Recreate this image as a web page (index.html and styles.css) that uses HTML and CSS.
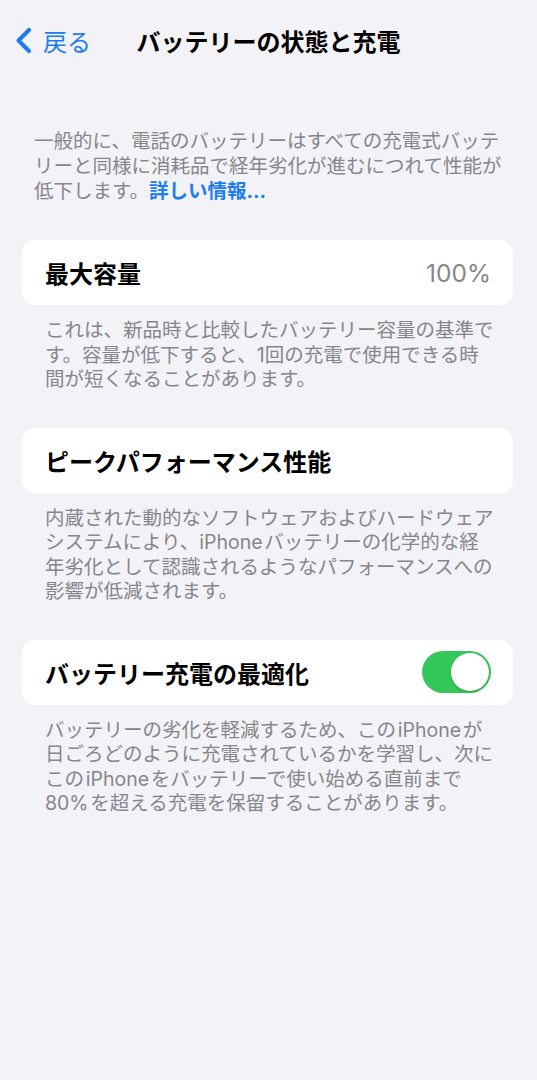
FILE: index.html
```html
<!DOCTYPE html>
<html lang="ja">
<head>
    <meta charset="UTF-8">
    <meta name="viewport" content="width=device-width, initial-scale=1.0">
    <title>バッテリーの状態と充電</title>
    <link rel="stylesheet" href="styles.css">
</head>
<body>
    <header class="nav">
        <a class="back" href="#">
            <svg class="chevron" width="18" height="27" viewBox="0 0 18 27">
                <path d="M15 3 L4.5 13.5 L15 24" fill="none" stroke="currentColor" stroke-width="4.2" stroke-linecap="round" stroke-linejoin="round"/>
            </svg>
            <span>戻る</span>
        </a>
        <h1 class="title">バッテリーの状態と充電</h1>
        <div></div>
    </header>

    <p class="intro">
        一般的に、電話のバッテリーはすべての充電式バッテ<br>リーと同様に消耗品で経年劣化が進むにつれて性能が<br>低下します。<a class="more" href="#">詳しい情報...</a>
    </p>

    <div class="card">
        <span class="label">最大容量</span>
        <span class="value">100%</span>
    </div>
    <p class="note">
        これは、新品時と比較したバッテリー容量の基準で<br>す。容量が低下すると、1回の充電で使用できる時<br>間が短くなることがあります。
    </p>

    <div class="card">
        <span class="label">ピークパフォーマンス性能</span>
    </div>
    <p class="note">
        内蔵された動的なソフトウェアおよびハードウェア<br>システムにより、iPhone&#8202;バッテリーの化学的な経<br>年劣化として認識されるようなパフォーマンスへの<br>影響が低減されます。
    </p>

    <div class="card">
        <span class="label">バッテリー充電の最適化</span>
        <span class="toggle on"><span class="knob"></span></span>
    </div>
    <p class="note">
        バッテリーの劣化を軽減するため、この&#8202;iPhone&#8202;が<br>日ごろどのように充電されているかを学習し、次に<br>この&#8202;iPhone&#8202;をバッテリーで使い始める直前まで<br>80%&#8202;を超える充電を保留することがあります。
    </p>
</body>
</html>
```

FILE: styles.css
```css
body {
    margin: 0;
    background: #f2f2f7;
    font-family: Inter, "Noto Sans CJK JP", sans-serif;
    color: #000000;
}

/* top navigation bar */
.nav {
    display: grid;
    grid-template-columns: 1fr auto 1fr;
    align-items: center;
    height: 80px;
}

.back {
    display: flex;
    align-items: center;
    gap: 11px;
    padding-left: 14px;
    color: #1e7cf2;
    text-decoration: none;
    font-size: 24px;
    justify-self: start;
}

.chevron {
    display: block;
}

.title {
    margin: 0;
    font-size: 24px;
    font-weight: 700;
}

/* text blocks */
.intro {
    margin: 49px 0 36px;
    padding: 0 20px 0 34px;
    font-size: 19.5px;
    line-height: 25px;
    color: #86868b;
    white-space: nowrap;
}

.more {
    color: #1e7cf2;
    font-weight: 700;
    text-decoration: none;
}

.note {
    margin: 13px 0 36px;
    padding: 0 20px 0 45px;
    font-size: 19.5px;
    line-height: 24.5px;
    color: #86868b;
    white-space: nowrap;
}

/* grouped rows */
.card {
    display: flex;
    align-items: center;
    justify-content: space-between;
    height: 65px;
    margin: 0 24px 0 22px;
    padding: 0 22px 0 23px;
    background: #ffffff;
    border-radius: 13px;
}

.label {
    font-size: 24px;
    font-weight: 700;
}

.value {
    font-size: 24.5px;
    color: #86868b;
}

.toggle {
    display: flex;
    align-items: center;
    justify-content: flex-end;
    width: 69px;
    height: 42px;
    padding: 2px;
    box-sizing: border-box;
    border-radius: 21px;
    background: #34c759;
}

.knob {
    width: 38px;
    height: 38px;
    border-radius: 50%;
    background: #ffffff;
    box-shadow: 0 1px 3px rgba(0, 0, 0, 0.2);
}
```
